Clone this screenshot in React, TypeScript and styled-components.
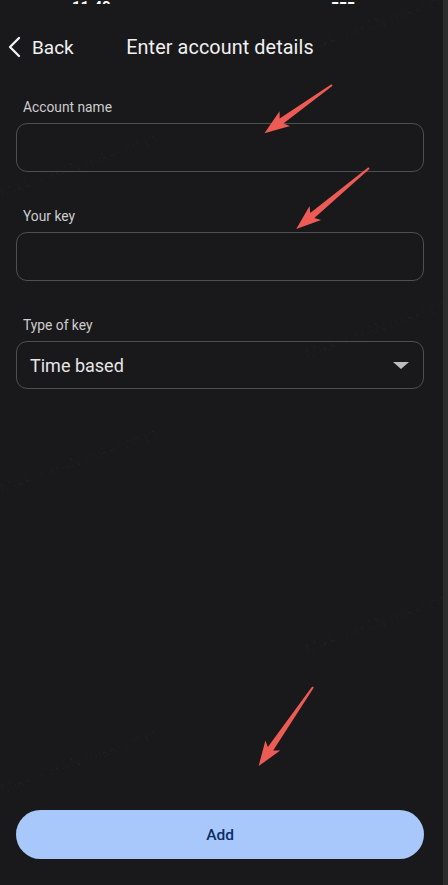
import React from 'react';
import styled, { createGlobalStyle } from 'styled-components';

const GlobalStyle = createGlobalStyle`
    * { box-sizing: border-box; }
    html, body {
        margin: 0;
        padding: 0;
        background: #19191b;
    }
    body {
        font-family: Roboto, "Open Sans", "Liberation Sans", sans-serif;
    }
`;

const Page = styled.div`
    display: flex;
    width: 448px;
    height: 885px;
    overflow: hidden;
    position: relative;
`;

const Screen = styled.div`
    flex: 1;
    display: flex;
    flex-direction: column;
    padding: 0 19px 26px 16px;
    background: #19191b;
`;

const EdgeStrip = styled.div`
    width: 5px;
    background: #2c2c2d;
`;

const StatusBar = styled.div`
    height: 4px;
    overflow: hidden;
    display: flex;
    justify-content: space-between;
    align-items: flex-end;
    padding: 0 40px 0 56px;
    color: #ffffff;
    font-size: 15px;
    font-weight: 700;
    line-height: 14px;

    span {
        margin-bottom: -10px;
    }
`;

const Header = styled.header`
    display: grid;
    grid-template-columns: 1fr auto 1fr;
    align-items: center;
    height: 48px;
    margin-top: 19px;
`;

const BackButton = styled.button`
    display: flex;
    align-items: center;
    gap: 11px;
    margin-left: -8px;
    background: none;
    border: none;
    padding: 0;
    color: #f2f2f2;
    font-family: inherit;
    font-size: 19px;
    cursor: pointer;
    justify-self: start;
`;

const Title = styled.h1`
    margin: 0;
    color: #f0f0f0;
    font-size: 19.8px;
    font-weight: 400;
    letter-spacing: 0.1px;
`;

const Form = styled.div`
    display: flex;
    flex-direction: column;
    gap: 36px;
    padding-top: 28px;
`;

const Field = styled.div`
    display: flex;
    flex-direction: column;
    gap: 8px;
`;

const Label = styled.label`
    padding-left: 7px;
    color: #cdcdcd;
    font-size: 13.8px;
    line-height: 16px;
`;

const Input = styled.input`
    height: 49px;
    width: 100%;
    background: transparent;
    border: 1px solid #4f4f52;
    border-radius: 11px;
    padding: 0 14px;
    color: #eeeeee;
    font-family: inherit;
    font-size: 17px;
    outline: none;
`;

const Select = styled.div`
    height: 48px;
    display: flex;
    align-items: center;
    justify-content: space-between;
    border: 1px solid #4f4f52;
    border-radius: 11px;
    padding: 0 14px 0 13px;
    color: #e6e6e6;
    font-size: 18px;
`;

const Caret = styled.span`
    width: 0;
    height: 0;
    border-left: 8px solid transparent;
    border-right: 8px solid transparent;
    border-top: 7px solid #bcbcbc;
`;

const AddButton = styled.button`
    margin-top: auto;
    height: 49px;
    width: 100%;
    border: none;
    border-radius: 25px;
    background: #a8c7fa;
    color: #0b2d66;
    font-family: inherit;
    font-size: 15.5px;
    font-weight: 500;
    cursor: pointer;
`;

const Overlay = styled.div`
    position: absolute;
    inset: 0;
    pointer-events: none;
`;

const Watermark = styled.span<{ x: number; y: number }>`
    position: absolute;
    left: ${({ x }) => x}px;
    top: ${({ y }) => y}px;
    transform: rotate(-20deg);
    transform-origin: left center;
    white-space: nowrap;
    font-size: 16px;
    color: rgba(255, 255, 255, 0.028);
`;

const ArrowLayer = styled.svg`
    position: absolute;
    left: 0;
    top: 0;
`;

const marks = [
    { x: 305, y: 40 },
    { x: 0, y: 185 },
    { x: 305, y: 345 },
    { x: 0, y: 480 },
    { x: 305, y: 640 },
    { x: 0, y: 780 },
];

// annotation arrows: tail point, angle, length
const arrows = [
    { x: 332, y: 85, angle: 144.5, len: 83 },
    { x: 369, y: 168, angle: 140, len: 95 },
    { x: 313, y: 687, angle: 124.5, len: 96 },
];

const Arrow: React.FC<{ x: number; y: number; angle: number; len: number }> = ({ x, y, angle, len }) => {
    const L = len;
    const pts = [
        [0, -1],
        [L - 21, -3.2],
        [L - 25, -9],
        [L, 0],
        [L - 25, 9],
        [L - 21, 3.2],
        [0, 1],
    ]
        .map((p) => p.join(','))
        .join(' ');
    return <polygon points={pts} fill="#ee5b55" transform={`translate(${x} ${y}) rotate(${angle})`} />;
};

const App: React.FC = () => {
    return (
        <Page>
            <GlobalStyle />
            <Screen>
                <StatusBar>
                    <span>11:40</span>
                    <span>▮▮▮ ▾ ▭</span>
                </StatusBar>
                <Header>
                    <BackButton>
                        <svg width="13" height="22" viewBox="0 0 13 22">
                            <path d="M11 2 L2 11 L11 20" fill="none" stroke="#f2f2f2" strokeWidth="2.3" strokeLinecap="round" strokeLinejoin="round" />
                        </svg>
                        Back
                    </BackButton>
                    <Title>Enter account details</Title>
                    <span />
                </Header>
                <Form>
                    <Field>
                        <Label>Account name</Label>
                        <Input />
                    </Field>
                    <Field>
                        <Label>Your key</Label>
                        <Input />
                    </Field>
                    <Field>
                        <Label>Type of key</Label>
                        <Select>
                            Time based
                            <Caret />
                        </Select>
                    </Field>
                </Form>
                <AddButton>Add</AddButton>
            </Screen>
            <EdgeStrip />
            <Overlay>
                {marks.map((m, i) => (
                    <Watermark key={i} x={m.x} y={m.y}>
                        Mikki CHAN mikki.chan
                    </Watermark>
                ))}
                <ArrowLayer width="448" height="885">
                    {arrows.map((a, i) => (
                        <Arrow key={i} {...a} />
                    ))}
                </ArrowLayer>
            </Overlay>
        </Page>
    );
};

export default App;
